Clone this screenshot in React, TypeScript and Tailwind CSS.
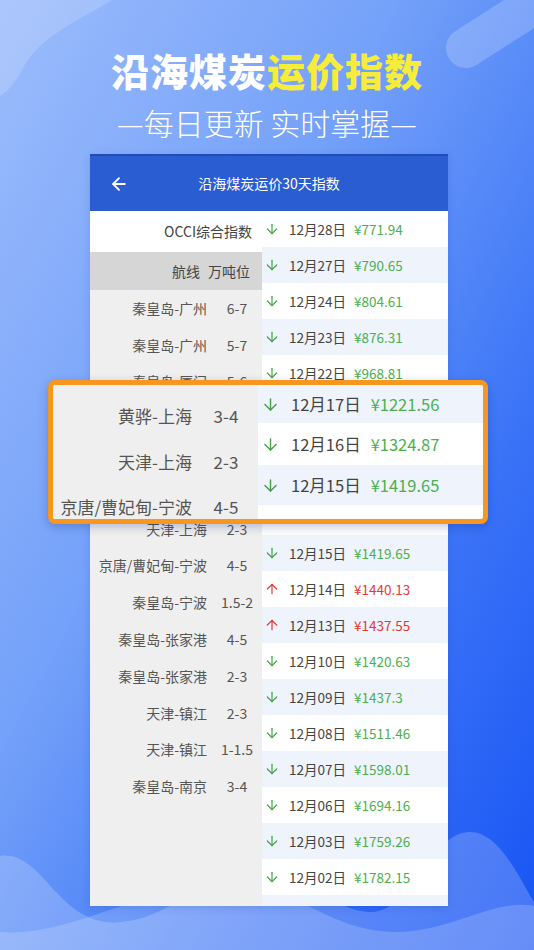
import { ArrowDown, ArrowLeft, ArrowUp } from 'lucide-react';

interface PriceRow {
  date: string;
  price: string;
  up?: boolean;
}

const prices: PriceRow[] = [
  { date: '12月28日', price: '¥771.94' },
  { date: '12月27日', price: '¥790.65' },
  { date: '12月24日', price: '¥804.61' },
  { date: '12月23日', price: '¥876.31' },
  { date: '12月22日', price: '¥968.81' },
  { date: '12月21日', price: '¥1045.32' },
  { date: '12月20日', price: '¥1133.70' },
  { date: '12月17日', price: '¥1221.56' },
  { date: '', price: '' },
  { date: '12月15日', price: '¥1419.65' },
  { date: '12月14日', price: '¥1440.13', up: true },
  { date: '12月13日', price: '¥1437.55', up: true },
  { date: '12月10日', price: '¥1420.63' },
  { date: '12月09日', price: '¥1437.3' },
  { date: '12月08日', price: '¥1511.46' },
  { date: '12月07日', price: '¥1598.01' },
  { date: '12月06日', price: '¥1694.16' },
  { date: '12月03日', price: '¥1759.26' },
  { date: '12月02日', price: '¥1782.15' },
  { date: '', price: '' },
];

const routes: [string, string][] = [
  ['秦皇岛-广州', '6-7'],
  ['秦皇岛-广州', '5-7'],
  ['秦皇岛-厦门', '5-6'],
  ['秦皇岛-福州', '3-4'],
  ['秦皇岛-上海', '4-5'],
  ['黄骅-上海', '3-4'],
  ['天津-上海', '2-3'],
  ['京唐/曹妃甸-宁波', '4-5'],
  ['秦皇岛-宁波', '1.5-2'],
  ['秦皇岛-张家港', '4-5'],
  ['秦皇岛-张家港', '2-3'],
  ['天津-镇江', '2-3'],
  ['天津-镇江', '1-1.5'],
  ['秦皇岛-南京', '3-4'],
];

const zoomRoutes: [string, string][] = [
  ['黄骅-上海', '3-4'],
  ['天津-上海', '2-3'],
  ['京唐/曹妃甸-宁波', '4-5'],
];

const zoomPrices = [
  { date: '12月17日', price: '¥1221.56', h: 'h-[38px]', bg: 'bg-[#eef3fc]' },
  { date: '12月16日', price: '¥1324.87', h: 'h-[42px]', bg: 'bg-white' },
  { date: '12月15日', price: '¥1419.65', h: 'h-[40px]', bg: 'bg-[#eef3fc]' },
];

function Backdrop() {
  return (
    <svg className="absolute inset-0" width="534" height="950" viewBox="0 0 534 950" aria-hidden="true">
      <path d="M0,0 L112,0 C80,20 40,35 22,70 C14,85 6,92 0,96 Z" fill="#ffffff" fillOpacity="0.16" />
      <line x1="466" y1="48" x2="580" y2="-25" stroke="#ffffff" strokeOpacity="0.2" strokeWidth="40" strokeLinecap="round" />
      <path
        d="M0,856 C40,850 55,915 105,922 C165,928 200,872 260,872 C315,872 330,912 372,912 C410,912 430,832 470,832 C500,832 520,880 534,902 L534,950 L0,950 Z"
        fill="#ffffff"
        fillOpacity="0.2"
      />
      <path
        d="M0,932 C70,938 150,882 230,884 C300,886 330,934 400,932 C455,930 495,898 534,906 L534,950 L0,950 Z"
        fill="#ffffff"
        fillOpacity="0.18"
      />
    </svg>
  );
}

export default function App() {
  return (
    <div
      className="relative w-[534px] h-[950px] overflow-hidden bg-[linear-gradient(118deg,#9cbcfc_0%,#74a1f9_38%,#3a73f7_72%,#1753f4_100%)]"
      style={{ fontFamily: '"Noto Sans CJK SC", "Noto Sans", sans-serif' }}
    >
      <Backdrop />

      <div className="relative flex flex-col">
        <h1 className="pt-[47px] text-center text-[38px] leading-[46px] font-black tracking-[1px] text-white">
          沿海煤炭<span className="text-[#f8ec3a]">运价指数</span>
        </h1>
        <p className="mt-[9px] text-center text-[30px] leading-[40px] font-light text-white">—每日更新 实时掌握—</p>

        {/* 手机截图 */}
        <div className="mt-[12px] ml-[90px] w-[358px] h-[752px] flex flex-col bg-white overflow-hidden shadow-[0_2px_8px_rgba(0,40,140,0.15)]">
          <div className="h-[57px] shrink-0 flex items-center bg-[#2a5cd2] border-t-2 border-[#1f4cb6] px-[19px] relative">
            <ArrowLeft size={20} strokeWidth={2.2} className="text-white" />
            <div className="absolute inset-x-0 text-center text-[14px] text-white">沿海煤炭运价30天指数</div>
          </div>

          <div className="flex flex-1 overflow-hidden">
            <div className="w-[172px] shrink-0 bg-[#efefef] text-[14px] text-[#555]">
              <div className="h-[41px] bg-white flex items-center justify-end pr-[10px] text-[#444]">OCCI综合指数</div>
              <div className="h-[38px] bg-[#d6d6d6] flex items-center justify-end pr-[12px] gap-[8px] text-[#444]">
                <span>航线</span>
                <span>万吨位</span>
              </div>
              {routes.map(([route, ton], i) => (
                <div key={i} className="h-[36.8px] flex items-center">
                  <span className="w-[117px] text-right whitespace-nowrap">{route}</span>
                  <span className="ml-[5px] w-[50px] text-center">{ton}</span>
                </div>
              ))}
            </div>

            <div className="flex-1 flex flex-col text-[13.5px]">
              {prices.map((p, i) => (
                <div
                  key={i}
                  className={`h-[36px] shrink-0 flex items-center pl-[2px] ${i % 2 === 0 ? 'bg-white' : 'bg-[#eef3fc]'}`}
                >
                  {p.date &&
                    (p.up ? (
                      <ArrowUp size={16} strokeWidth={1.8} className="text-[#e53935]" />
                    ) : (
                      <ArrowDown size={16} strokeWidth={1.8} className="text-[#43a047]" />
                    ))}
                  <span className="ml-[9px] text-[#444]">{p.date}</span>
                  <span className={`ml-[8px] ${p.up ? 'text-[#e53935]' : 'text-[#4caf50]'}`}>{p.price}</span>
                </div>
              ))}
            </div>
          </div>
        </div>
      </div>

      {/* 放大框 */}
      <div className="absolute left-[48px] top-[380px] w-[440px] h-[144px] border-[5px] border-[#f8961e] rounded-[7px] overflow-hidden flex bg-white shadow-[0_3px_10px_rgba(0,30,120,0.25)]">
        <div className="w-[205px] shrink-0 bg-[#efefef] pt-[8px] text-[17px] text-[#555]">
          {zoomRoutes.map(([route, ton]) => (
            <div key={route} className="h-[45.5px] flex items-center">
              <span className="w-[139px] text-right whitespace-nowrap">{route}</span>
              <span className="ml-[4px] w-[60px] text-center">{ton}</span>
            </div>
          ))}
        </div>
        <div className="flex-1 flex flex-col text-[16.5px]">
          {zoomPrices.map((p) => (
            <div key={p.date} className={`${p.h} shrink-0 flex items-center pl-[3px] ${p.bg}`}>
              <ArrowDown size={19} strokeWidth={1.8} className="text-[#43a047]" />
              <span className="ml-[11px] text-[#444]">{p.date}</span>
              <span className="ml-[10px] text-[#4caf50]">{p.price}</span>
            </div>
          ))}
        </div>
      </div>
    </div>
  );
}
